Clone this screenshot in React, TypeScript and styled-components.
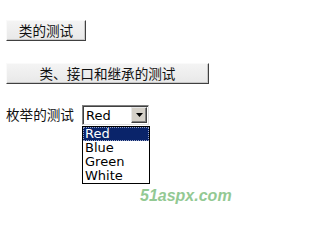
import React from 'react';
import styled, { createGlobalStyle } from 'styled-components';

const GlobalStyle = createGlobalStyle`
  html, body {
    margin: 0;
    padding: 0;
    background: #fff;
  }
  body {
    font-family: "Noto Sans CJK SC", sans-serif;
    color: #000;
  }
`;

const options = ['Red', 'Blue', 'Green', 'White'];

const App: React.FC = () => {
  return (
    <>
      <GlobalStyle />
      <Page>
        <Button $width={80}>类的测试</Button>
        <Button $width={203}>类、接口和继承的测试</Button>
        <Row>
          <Label>枚举的测试</Label>
          <SelectWrap>
            <Select>
              <SelectValue>Red</SelectValue>
              <ArrowButton>
                <svg width="7" height="4" viewBox="0 0 7 4">
                  <path d="M0 0 H7 L3.5 4 Z" fill="#000" />
                </svg>
              </ArrowButton>
            </Select>
            <List>
              {options.map((o, i) => (
                <Option key={o} $active={i === 0}>{o}</Option>
              ))}
            </List>
          </SelectWrap>
        </Row>
        <Watermark>51aspx.com</Watermark>
      </Page>
    </>
  );
};

export default App;

const Page = styled.div`
  position: relative;
  width: 247px;
  height: 222px;
  padding: 20px 0 0 6px;
  box-sizing: border-box;
  display: flex;
  flex-direction: column;
  align-items: flex-start;
`;

const Button = styled.div<{ $width: number }>`
  width: ${(p) => p.$width}px;
  height: 21px;
  box-sizing: border-box;
  background: linear-gradient(#f4f4f4, #e8e8e8);
  border-top: 1px solid #fafafa;
  border-left: 1px solid #fafafa;
  border-right: 1px solid #404040;
  border-bottom: 1px solid #404040;
  box-shadow: inset -1px -1px 0 #c8c8c8;
  display: flex;
  align-items: center;
  justify-content: center;
  font-size: 13.6px;
  line-height: 1;
  color: #111;
  margin-bottom: 22px;
`;

const Row = styled.div`
  display: flex;
  align-items: center;
  margin-top: -1px;
`;

const Label = styled.span`
  font-size: 13.6px;
  line-height: 1;
  width: 76px;
  color: #111;
`;

const SelectWrap = styled.div`
  position: relative;
`;

const Select = styled.div`
  width: 67px;
  height: 20px;
  box-sizing: border-box;
  border-top: 1px solid #808080;
  border-left: 1px solid #808080;
  border-right: 1px solid #e0e0e0;
  border-bottom: 1px solid #e0e0e0;
  box-shadow: inset 1px 1px 0 #404040;
  background: #fff;
  display: flex;
  align-items: center;
  justify-content: space-between;
  padding: 0 1px 0 3px;
`;

const SelectValue = styled.span`
  font-family: "DejaVu Sans", Verdana, sans-serif;
  font-size: 13px;
  line-height: 1;
`;

const ArrowButton = styled.div`
  width: 16px;
  height: 16px;
  box-sizing: border-box;
  background: #d4d0c8;
  border-top: 1px solid #e8e8e8;
  border-left: 1px solid #e8e8e8;
  border-right: 1px solid #404040;
  border-bottom: 1px solid #404040;
  box-shadow: inset -1px -1px 0 #808080;
  display: flex;
  align-items: center;
  justify-content: center;
`;

const List = styled.div`
  position: absolute;
  top: 21px;
  left: 0;
  width: 68px;
  box-sizing: border-box;
  border: 1px solid #000;
  background: #fff;
  display: flex;
  flex-direction: column;
`;

const Option = styled.div<{ $active: boolean }>`
  height: 14px;
  box-sizing: border-box;
  padding-left: 2px;
  font-family: "DejaVu Sans", Verdana, sans-serif;
  font-size: 13px;
  line-height: 13px;
  color: ${(p) => (p.$active ? '#fff' : '#000')};
  background: ${(p) => (p.$active ? '#0a246a' : 'transparent')};
  outline: ${(p) => (p.$active ? '1px dotted #9aa6c8' : 'none')};
  outline-offset: -1px;
`;

const Watermark = styled.div`
  position: absolute;
  left: 140px;
  top: 187px;
  font-family: "Liberation Sans", Arial, sans-serif;
  font-weight: bold;
  font-style: italic;
  font-size: 16px;
  color: #93c993;
`;
